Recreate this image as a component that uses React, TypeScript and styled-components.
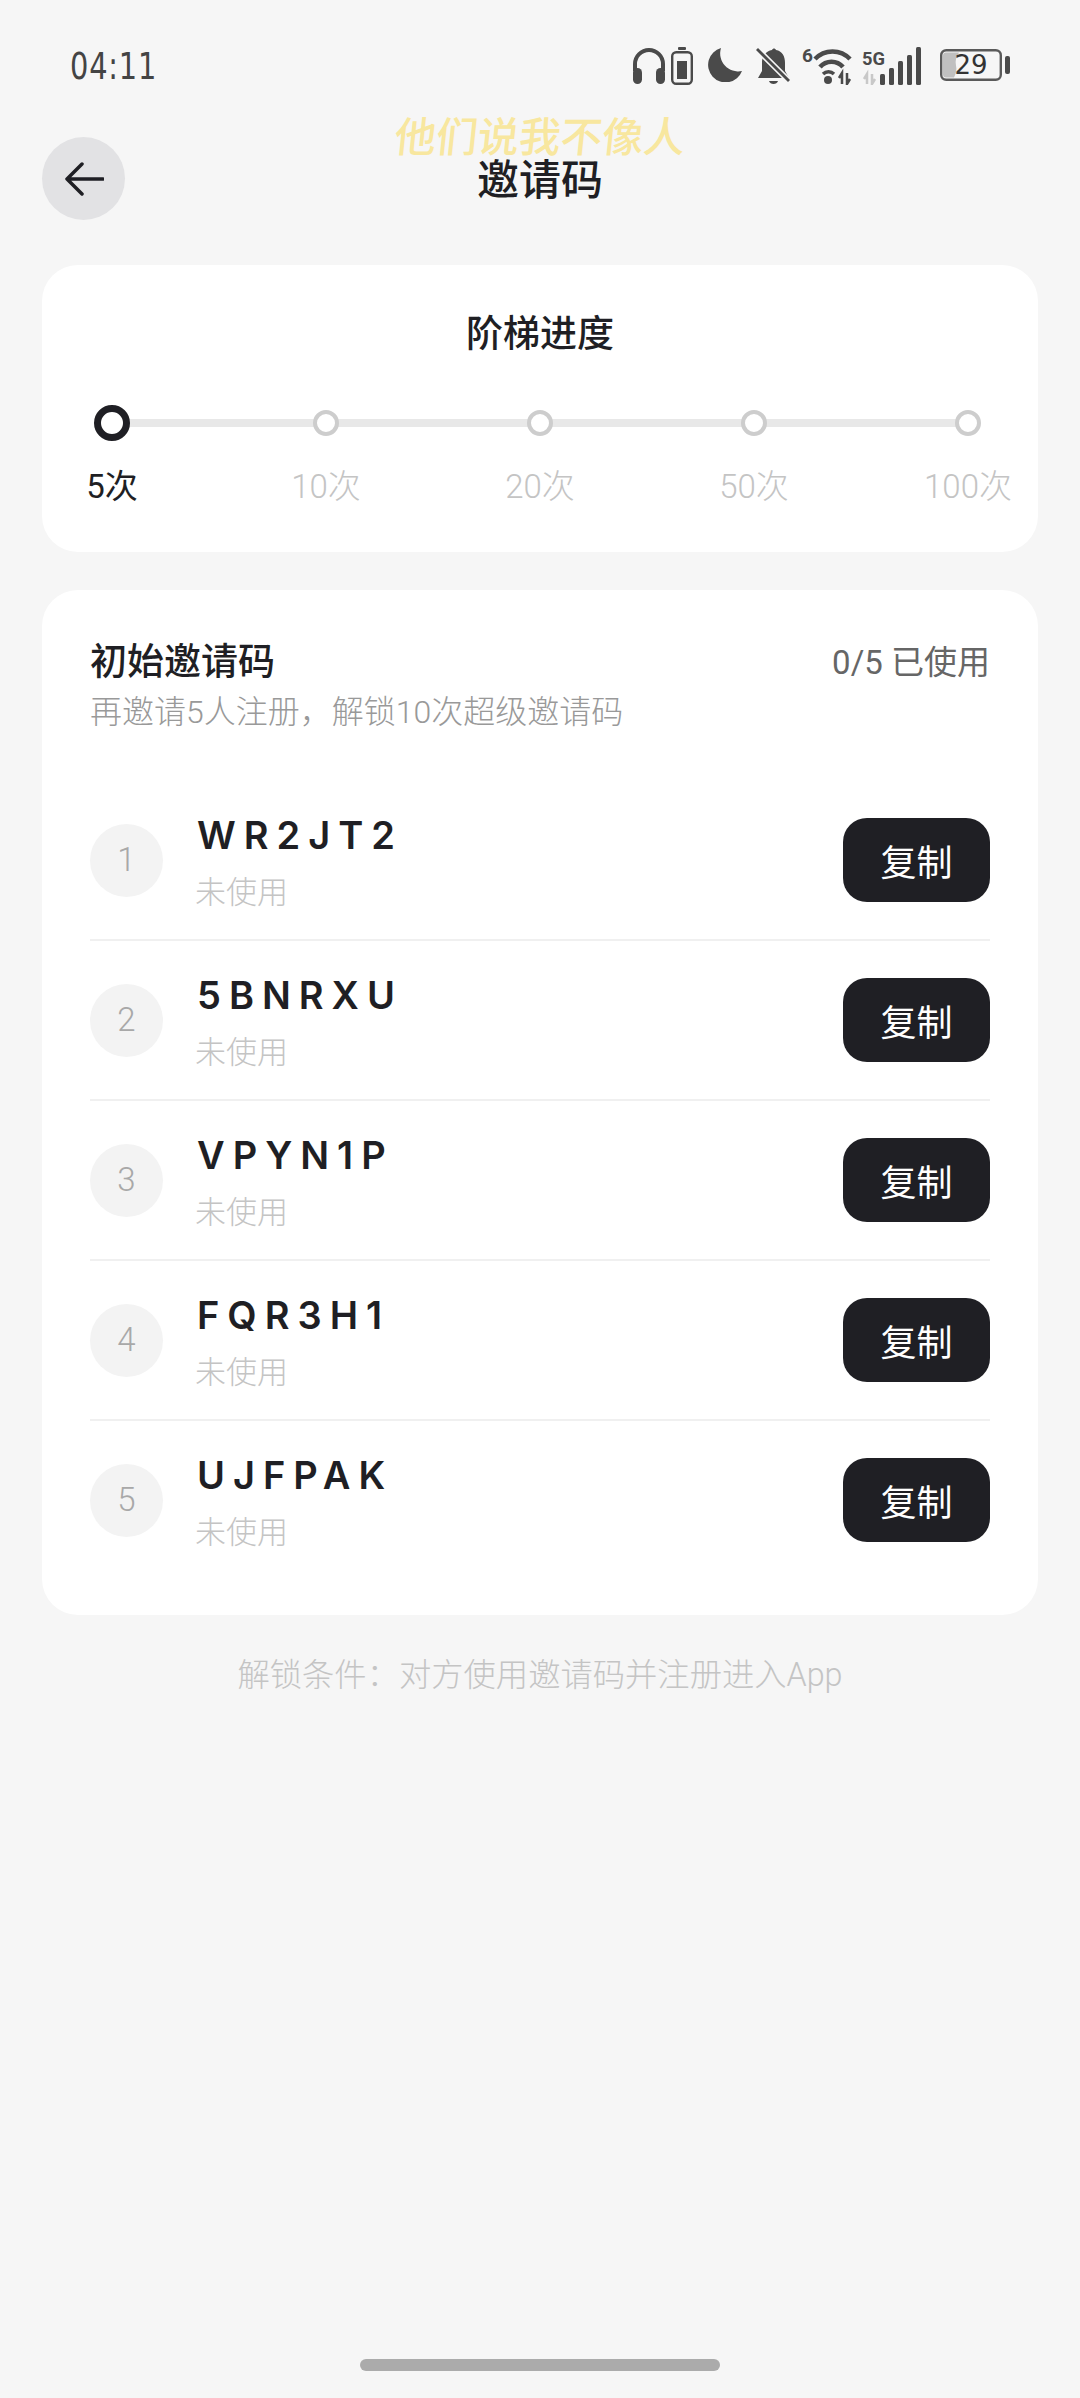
import React from 'react';
import styled, { createGlobalStyle } from 'styled-components';

const GlobalStyle = createGlobalStyle`
  html, body {
    margin: 0;
    padding: 0;
    background: #f6f6f6;
  }
  * {
    box-sizing: border-box;
  }
`;

const FONT = `Roboto, "Noto Sans CJK SC", sans-serif`;

const Page = styled.div`
  width: 1080px;
  height: 2398px;
  display: flex;
  flex-direction: column;
  padding: 0 42px;
  background: #f6f6f6;
  color: #1f1f24;
  font-family: ${FONT};
  overflow: hidden;
`;

const StatusBar = styled.div`
  height: 137px;
  margin: 0 -42px;
  padding: 47px 70px 0 70px;
  display: flex;
  justify-content: space-between;
  align-items: flex-start;
`;

const Time = styled.div`
  font-family: "DejaVu Sans", sans-serif;
  font-size: 37px;
  line-height: 40px;
  color: #444;
  letter-spacing: 1px;
  transform: scaleX(0.78);
  transform-origin: left center;
`;

const StatusIcons = styled.div`
  display: flex;
  align-items: flex-start;
`;

const Icon = styled.svg<{ $gap?: number; $lift?: number }>`
  display: block;
  margin-left: ${p => p.$gap ?? 0}px;
  margin-top: ${p => -(p.$lift ?? 0)}px;
  flex: none;
`;

const Header = styled.div`
  position: relative;
  height: 83px;
  display: flex;
  align-items: center;
  justify-content: center;
  margin-bottom: 45px;
`;

const BackButton = styled.button`
  position: absolute;
  left: 0;
  top: 0;
  width: 83px;
  height: 83px;
  padding: 0;
  border: none;
  border-radius: 50%;
  background: #e2e2e4;
  display: flex;
  align-items: center;
  justify-content: center;
`;

const Title = styled.div`
  font-size: 42px;
  font-weight: 500;
  line-height: 60px;
  margin-top: 4px;
`;

const Watermark = styled.div`
  position: absolute;
  left: 0;
  right: 0;
  top: -24px;
  text-align: center;
  font-size: 41.5px;
  line-height: 50px;
  color: #f8e79f;
  font-weight: 500;
  transform: skewX(-6deg);
`;

const Card = styled.div`
  background: #fff;
  border-radius: 36px;
`;

const ProgressCard = styled(Card)`
  height: 287px;
  padding: 45px 20px 0;
  margin-bottom: 38px;
`;

const ProgressTitle = styled.div`
  text-align: center;
  font-size: 37px;
  font-weight: 500;
  line-height: 50px;
  margin-bottom: 45px;
`;

const Steps = styled.div`
  position: relative;
  display: flex;
  justify-content: space-between;

  &::before {
    content: '';
    position: absolute;
    left: 50px;
    right: 50px;
    top: 14px;
    height: 8px;
    background: #e8e8e8;
  }
`;

const Step = styled.div`
  position: relative;
  width: 100px;
  display: flex;
  flex-direction: column;
  align-items: center;
`;

const NodeSlot = styled.div`
  height: 36px;
  display: flex;
  align-items: center;
  justify-content: center;
  margin-bottom: 24px;
`;

const Node = styled.div<{ $active?: boolean }>`
  width: ${p => (p.$active ? 36 : 26)}px;
  height: ${p => (p.$active ? 36 : 26)}px;
  border-radius: 50%;
  background: #fff;
  border: ${p => (p.$active ? '7px solid #1f1f24' : '4px solid #cdcdcd')};
`;

const StepLabel = styled.div<{ $active?: boolean }>`
  font-size: 33px;
  line-height: 44px;
  white-space: nowrap;
  font-weight: ${p => (p.$active ? 400 : 300)};
  color: ${p => (p.$active ? '#1f1f24' : '#c4c4c4')};
`;

const CodesCard = styled(Card)`
  height: 1025px;
  padding: 51px 48px 0;
`;

const CardHead = styled.div`
  display: flex;
  justify-content: space-between;
  align-items: flex-start;
  margin-bottom: 47px;
`;

const CardTitle = styled.div`
  font-size: 37px;
  font-weight: 500;
  line-height: 44px;
  margin-bottom: 5px;
`;

const CardHint = styled.div`
  font-size: 32px;
  line-height: 44px;
  font-weight: 300;
  color: #999;
`;

const UsedCount = styled.div`
  font-size: 33px;
  line-height: 44px;
  color: #666;
`;

const CodeRow = styled.div<{ $last?: boolean }>`
  height: 160px;
  display: flex;
  align-items: center;
  border-bottom: 2px solid ${p => (p.$last ? 'transparent' : '#f0f0f0')};
`;

const IndexBadge = styled.div`
  width: 73px;
  height: 73px;
  flex: none;
  padding-bottom: 2px;
  border-radius: 50%;
  background: #f3f3f3;
  display: flex;
  align-items: center;
  justify-content: center;
  font-size: 33px;
  font-weight: 300;
  color: #a8a8a8;
`;

const CodeInfo = styled.div`
  flex: 1;
  margin-left: 32px;
  padding-top: 7px;
`;

const CodeText = styled.div`
  font-family: Inter, Roboto, sans-serif;
  font-size: 38px;
  font-weight: 600;
  line-height: 44px;
  letter-spacing: 8px;
  margin-left: 2px;
  margin-bottom: 14px;
`;

const CodeStatus = styled.div`
  font-size: 31px;
  font-weight: 300;
  line-height: 44px;
  color: #c4c4c4;
`;

const CopyButton = styled.button`
  width: 147px;
  height: 84px;
  padding: 0;
  border: none;
  border-radius: 24px;
  background: #1f1f24;
  color: #fff;
  font-family: ${FONT};
  font-size: 36px;
  font-weight: 400;
`;

const Footnote = styled.div`
  margin-top: 37px;
  text-align: center;
  font-size: 32.3px;
  font-weight: 300;
  line-height: 46px;
  color: #c4c4c4;
`;

const HomeBar = styled.div`
  width: 360px;
  height: 12px;
  margin: auto auto 27px;
  border-radius: 6px;
  background: #ababab;
`;

const DARK = '#4a4a4a';

const StatusIconSet = () => (
  <StatusIcons>
    {/* headphones */}
    <Icon width="34" height="38" viewBox="0 0 34 38">
      <path d="M3 24V17a14 14 0 0 1 28 0v7" fill="none" stroke={DARK} strokeWidth="4" />
      <rect x="1" y="21" width="9" height="16" rx="4.500" fill={DARK} />
      <rect x="24" y="21" width="9" height="16" rx="4.500" fill={DARK} />
    </Icon>
    {/* small battery */}
    <Icon $gap={5} width="22" height="38" viewBox="0 0 22 38">
      <rect x="7" y="0" width="8" height="3" rx="1" fill={DARK} />
      <rect x="1.200" y="5.200" width="19.600" height="31.600" rx="4" fill="none" stroke={DARK} strokeWidth="2.400" />
      <rect x="6" y="14" width="10" height="18" fill={DARK} />
    </Icon>
    {/* moon */}
    <Icon $gap={14} width="35" height="35" viewBox="0 0 35 35">
      <path d="M14 1A17.500 17.500 0 1 0 35 24A18 18 0 0 1 14 1Z" fill={DARK} />
    </Icon>
    {/* muted bell */}
    <Icon $gap={14} width="35" height="40" viewBox="0 0 35 40">
      <path d="M16 3c1-2 3-2 4 0c6 1 9 6 9 13v8l4 7H2l4-7v-9c0-6 4-11 10-12Z" fill={DARK} />
      <path d="M13 34h9c-1 4-8 4-9 0Z" fill={DARK} />
      <path d="M1 2L33 34" stroke="#f6f6f6" strokeWidth="6" />
      <path d="M1 2L33 34" stroke={DARK} strokeWidth="2.800" />
    </Icon>
    {/* wifi with 6 */}
    <Icon $gap={11} $lift={4} width="51" height="42" viewBox="0 -4 51 42">
      <text x="0" y="15" fontFamily="Roboto, sans-serif" fontWeight="700" fontSize="19" fill={DARK}>6</text>
      <path d="M13 12a24 24 0 0 1 35 0" fill="none" stroke={DARK} strokeWidth="4.500" />
      <path d="M18 20a15 15 0 0 1 23 0" fill="none" stroke={DARK} strokeWidth="4.500" />
      <path d="M21 27a8 8 0 0 1 11 0" fill="none" stroke={DARK} strokeWidth="3.500" />
      <circle cx="26" cy="33" r="4" fill={DARK} />
      <path d="M40 37V26l-3 5M45 26v11l3-5" fill="none" stroke={DARK} strokeWidth="2.500" />
    </Icon>
    {/* 5G signal */}
    <Icon $gap={9} width="61" height="38" viewBox="0 0 61 38">
      <text x="0" y="18" fontFamily="Roboto, sans-serif" fontWeight="700" fontSize="18" textLength="23" lengthAdjust="spacingAndGlyphs" fill={DARK}>5G</text>
      <path d="M5 37V27l-3 5M10 27v10l3-5" fill="none" stroke="#c8c8c8" strokeWidth="2.500" />
      <rect x="18" y="27" width="5" height="11" rx="1.500" fill={DARK} />
      <rect x="27" y="21" width="5" height="17" rx="1.500" fill={DARK} />
      <rect x="36" y="14" width="5" height="24" rx="1.500" fill={DARK} />
      <rect x="45" y="8" width="5" height="30" rx="1.500" fill={DARK} />
      <rect x="54" y="0" width="5" height="38" rx="1.500" fill={DARK} />
    </Icon>
    {/* battery */}
    <Icon $gap={17} width="70" height="34" viewBox="0 0 70 34">
      <rect x="1.200" y="3.200" width="59.600" height="29.600" rx="5" fill="none" stroke="#5a5a5a" strokeWidth="2.400" />
      <path d="M6 5.500h13c-3 5-4 8-3 13c1 4 0 8-2 12H6a3 3 0 0 1-3-3V8.500a3 3 0 0 1 3-3Z" fill="#c0c0c0" />
      <rect x="65" y="9" width="5" height="18" rx="2" fill={DARK} />
      <text x="31" y="27" textAnchor="middle" fontFamily="'DejaVu Sans', sans-serif" fontSize="26" fill="#333">29</text>
    </Icon>
  </StatusIcons>
);

const BackArrow = () => (
  <svg width="40" height="36" viewBox="0 0 40 36">
    <path d="M18 3L3 18l15 15M3 18h36" fill="none" stroke="#1f1f24" strokeWidth="3.500" strokeLinecap="round" strokeLinejoin="round" />
  </svg>
);

const steps = ['5次', '10次', '20次', '50次', '100次'];
const codes = ['WR2JT2', '5BNRXU', 'VPYN1P', 'FQR3H1', 'UJFPAK'];

export default function App() {
  return (
    <>
      <GlobalStyle />
      <Page>
        <StatusBar>
          <Time>04:11</Time>
          <StatusIconSet />
        </StatusBar>

        <Header>
          <BackButton aria-label="返回">
            <BackArrow />
          </BackButton>
          <Watermark>他们说我不像人</Watermark>
          <Title>邀请码</Title>
        </Header>

        <ProgressCard>
          <ProgressTitle>阶梯进度</ProgressTitle>
          <Steps>
            {steps.map((label, i) => (
              <Step key={label}>
                <NodeSlot>
                  <Node $active={i === 0} />
                </NodeSlot>
                <StepLabel $active={i === 0}>{label}</StepLabel>
              </Step>
            ))}
          </Steps>
        </ProgressCard>

        <CodesCard>
          <CardHead>
            <div>
              <CardTitle>初始邀请码</CardTitle>
              <CardHint>再邀请5人注册，解锁10次超级邀请码</CardHint>
            </div>
            <UsedCount>0/5 已使用</UsedCount>
          </CardHead>
          {codes.map((code, i) => (
            <CodeRow key={code} $last={i === codes.length - 1}>
              <IndexBadge>{i + 1}</IndexBadge>
              <CodeInfo>
                <CodeText>{code}</CodeText>
                <CodeStatus>未使用</CodeStatus>
              </CodeInfo>
              <CopyButton>复制</CopyButton>
            </CodeRow>
          ))}
        </CodesCard>

        <Footnote>解锁条件：对方使用邀请码并注册进入App</Footnote>
        <HomeBar />
      </Page>
    </>
  );
}
